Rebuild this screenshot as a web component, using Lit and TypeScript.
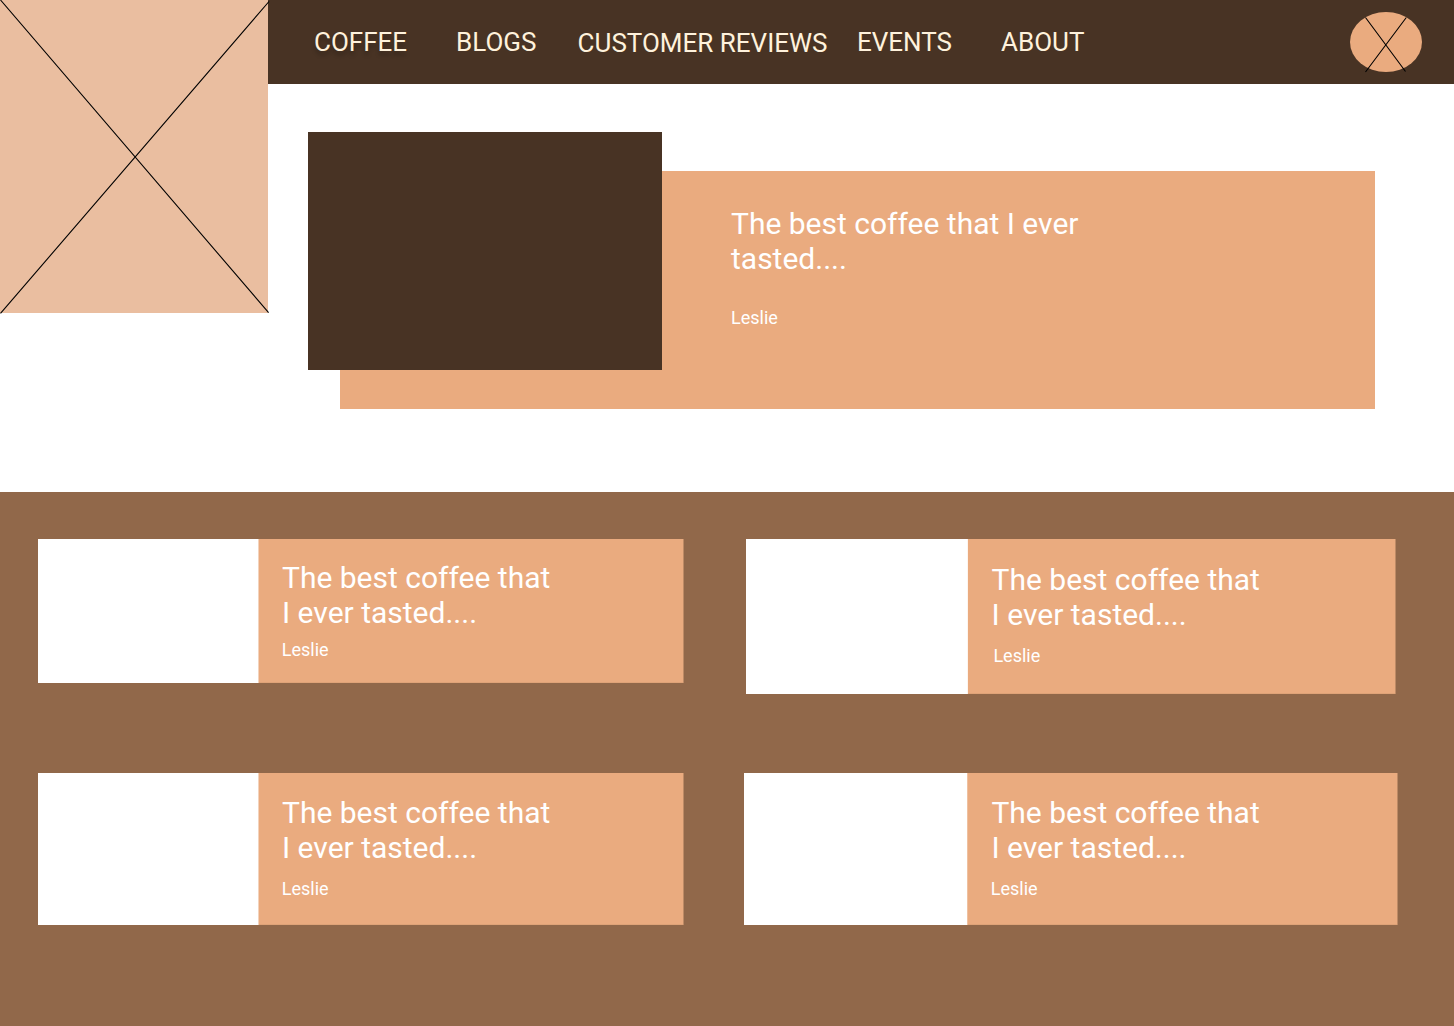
import { LitElement, html, css } from "lit";
import { customElement } from "lit/decorators.js";

interface Review {
  name: string;
  lines: string[];
  author: string;
}

const NAV = [
  { label: "COFFEE", cls: "coffee" },
  { label: "BLOGS", cls: "blogs" },
  { label: "CUSTOMER REVIEWS", cls: "reviews" },
  { label: "EVENTS", cls: "events" },
  { label: "ABOUT", cls: "about" },
];

const REVIEWS: Review[] = ["one", "two", "three", "four"].map((name) => ({
  name,
  lines: ["The best coffee that", "I ever tasted...."],
  author: "Leslie",
}));

@customElement("app-root")
export class AppRoot extends LitElement {
  static styles = css`
    :host {
      display: flex;
      flex-direction: column;
      width: 1454px;
      height: 1026px;
      overflow: hidden;
      background: #fff;
      color: #fff;
      font-family: Roboto, "Liberation Sans", sans-serif;
    }
    * { box-sizing: border-box; }
    p { margin: 0; }
    .top { display: flex; height: 492px; }
    .logo { width: 268px; height: 313px; background: #eabea0; flex: none; z-index: 1; }
    svg { display: block; overflow: visible; }
    .main { flex: 1; display: flex; flex-direction: column; }
    nav {
      height: 84px;
      background: #483324;
      display: flex;
      align-items: flex-start;
      padding: 12px 32px 0 46px;
      flex: none;
    }
    nav a {
      font-size: 26px;
      line-height: 30px;
      padding-top: 15px;
      white-space: nowrap;
      color: #fff2dc;
      flex: none;
    }
    .coffee { width: 142px; text-shadow: 0 4px 4px rgba(0, 0, 0, 0.25); }
    .blogs { width: 121.6px; }
    .reviews { width: 279.4px; padding-top: 16px; }
    .events { width: 144px; }
    .avatar { margin-left: auto; }
    .hero { display: grid; padding: 48px 0 0 40px; }
    .photo { grid-area: 1 / 1; width: 354px; height: 238px; background: #483324; z-index: 1; }
    .quote {
      grid-area: 1 / 1;
      width: 1035px;
      height: 238px;
      margin: 39px 0 0 32px;
      padding: 35px 0 0 391px;
      background: #eaab7f;
    }
    .title { font-size: 30px; line-height: 35px; white-space: nowrap; }
    .author { font-size: 18px; line-height: 21px; }
    .quote .author { margin-top: 31px; }
    .list {
      flex: 1;
      background: #91684a;
      display: grid;
      grid-template-columns: 708px 1fr;
      grid-template-rows: 234px 1fr;
      padding: 47px 0 0 38px;
    }
    .card {
      display: flex;
      background: #eaab7f;
      box-shadow: inset -1px 0 #bd8a65, inset 0 -1px #dfa378;
    }
    .thumb { background: #fff; flex: none; width: 221px; border-right: 1px solid #f3d3bc; }
    .one { width: 646px; height: 144px; }
    .two { width: 650px; height: 155px; }
    .three { width: 646px; height: 152px; }
    .four { width: 654px; height: 152px; margin-left: -2px; }
    .two .thumb { width: 222px; border-color: #fdf5ef; }
    .four .thumb { width: 224px; border-color: #efc1a0; }
    .body { padding: 21px 0 0 23px; }
    .two .body { padding-left: 23.6px; padding-top: 23px; }
    .three .body, .four .body { padding-top: 22px; }
    .body .author { margin: 9px 0 0 -0.2px; }
    .two .author { margin: 13px 0 0 1.8px; }
    .three .author, .four .author { margin-top: 13px; }
    .four .author { margin-left: -0.6px; }
    .four .body { padding-left: 23.4px; }
  `;

  render() {
    return html`
      <section class="top">
        <div class="logo">
          <svg width="268" height="313" viewBox="0 0 268 313" stroke="#000">
            <path d="M0.5 0L268.6 312.6M269 1.5L0.5 313.4" stroke-width="1.1" />
          </svg>
        </div>
        <div class="main">
          <nav>
            ${NAV.map((n) => html`<a class=${n.cls}>${n.label}</a>`)}
            <svg class="avatar" width="72" height="60" viewBox="0 0 72 60">
              <ellipse cx="36" cy="30" rx="36" ry="30" fill="#eaab7f" />
              <path d="M15.5 5.5L55.5 59.5M56.3 5.5L15.5 60" stroke="#000" stroke-width="1.1" />
            </svg>
          </nav>
          <div class="hero">
            <div class="photo"></div>
            <div class="quote">
              <p class="title">The best coffee that I ever<br />tasted....</p>
              <p class="author">Leslie</p>
            </div>
          </div>
        </div>
      </section>
      <section class="list">
        ${REVIEWS.map(
          (r) => html`<article class="card ${r.name}">
            <div class="thumb"></div>
            <div class="body">
              <p class="title">${r.lines[0]}<br />${r.lines[1]}</p>
              <p class="author">${r.author}</p>
            </div>
          </article>`
        )}
      </section>
    `;
  }
}
